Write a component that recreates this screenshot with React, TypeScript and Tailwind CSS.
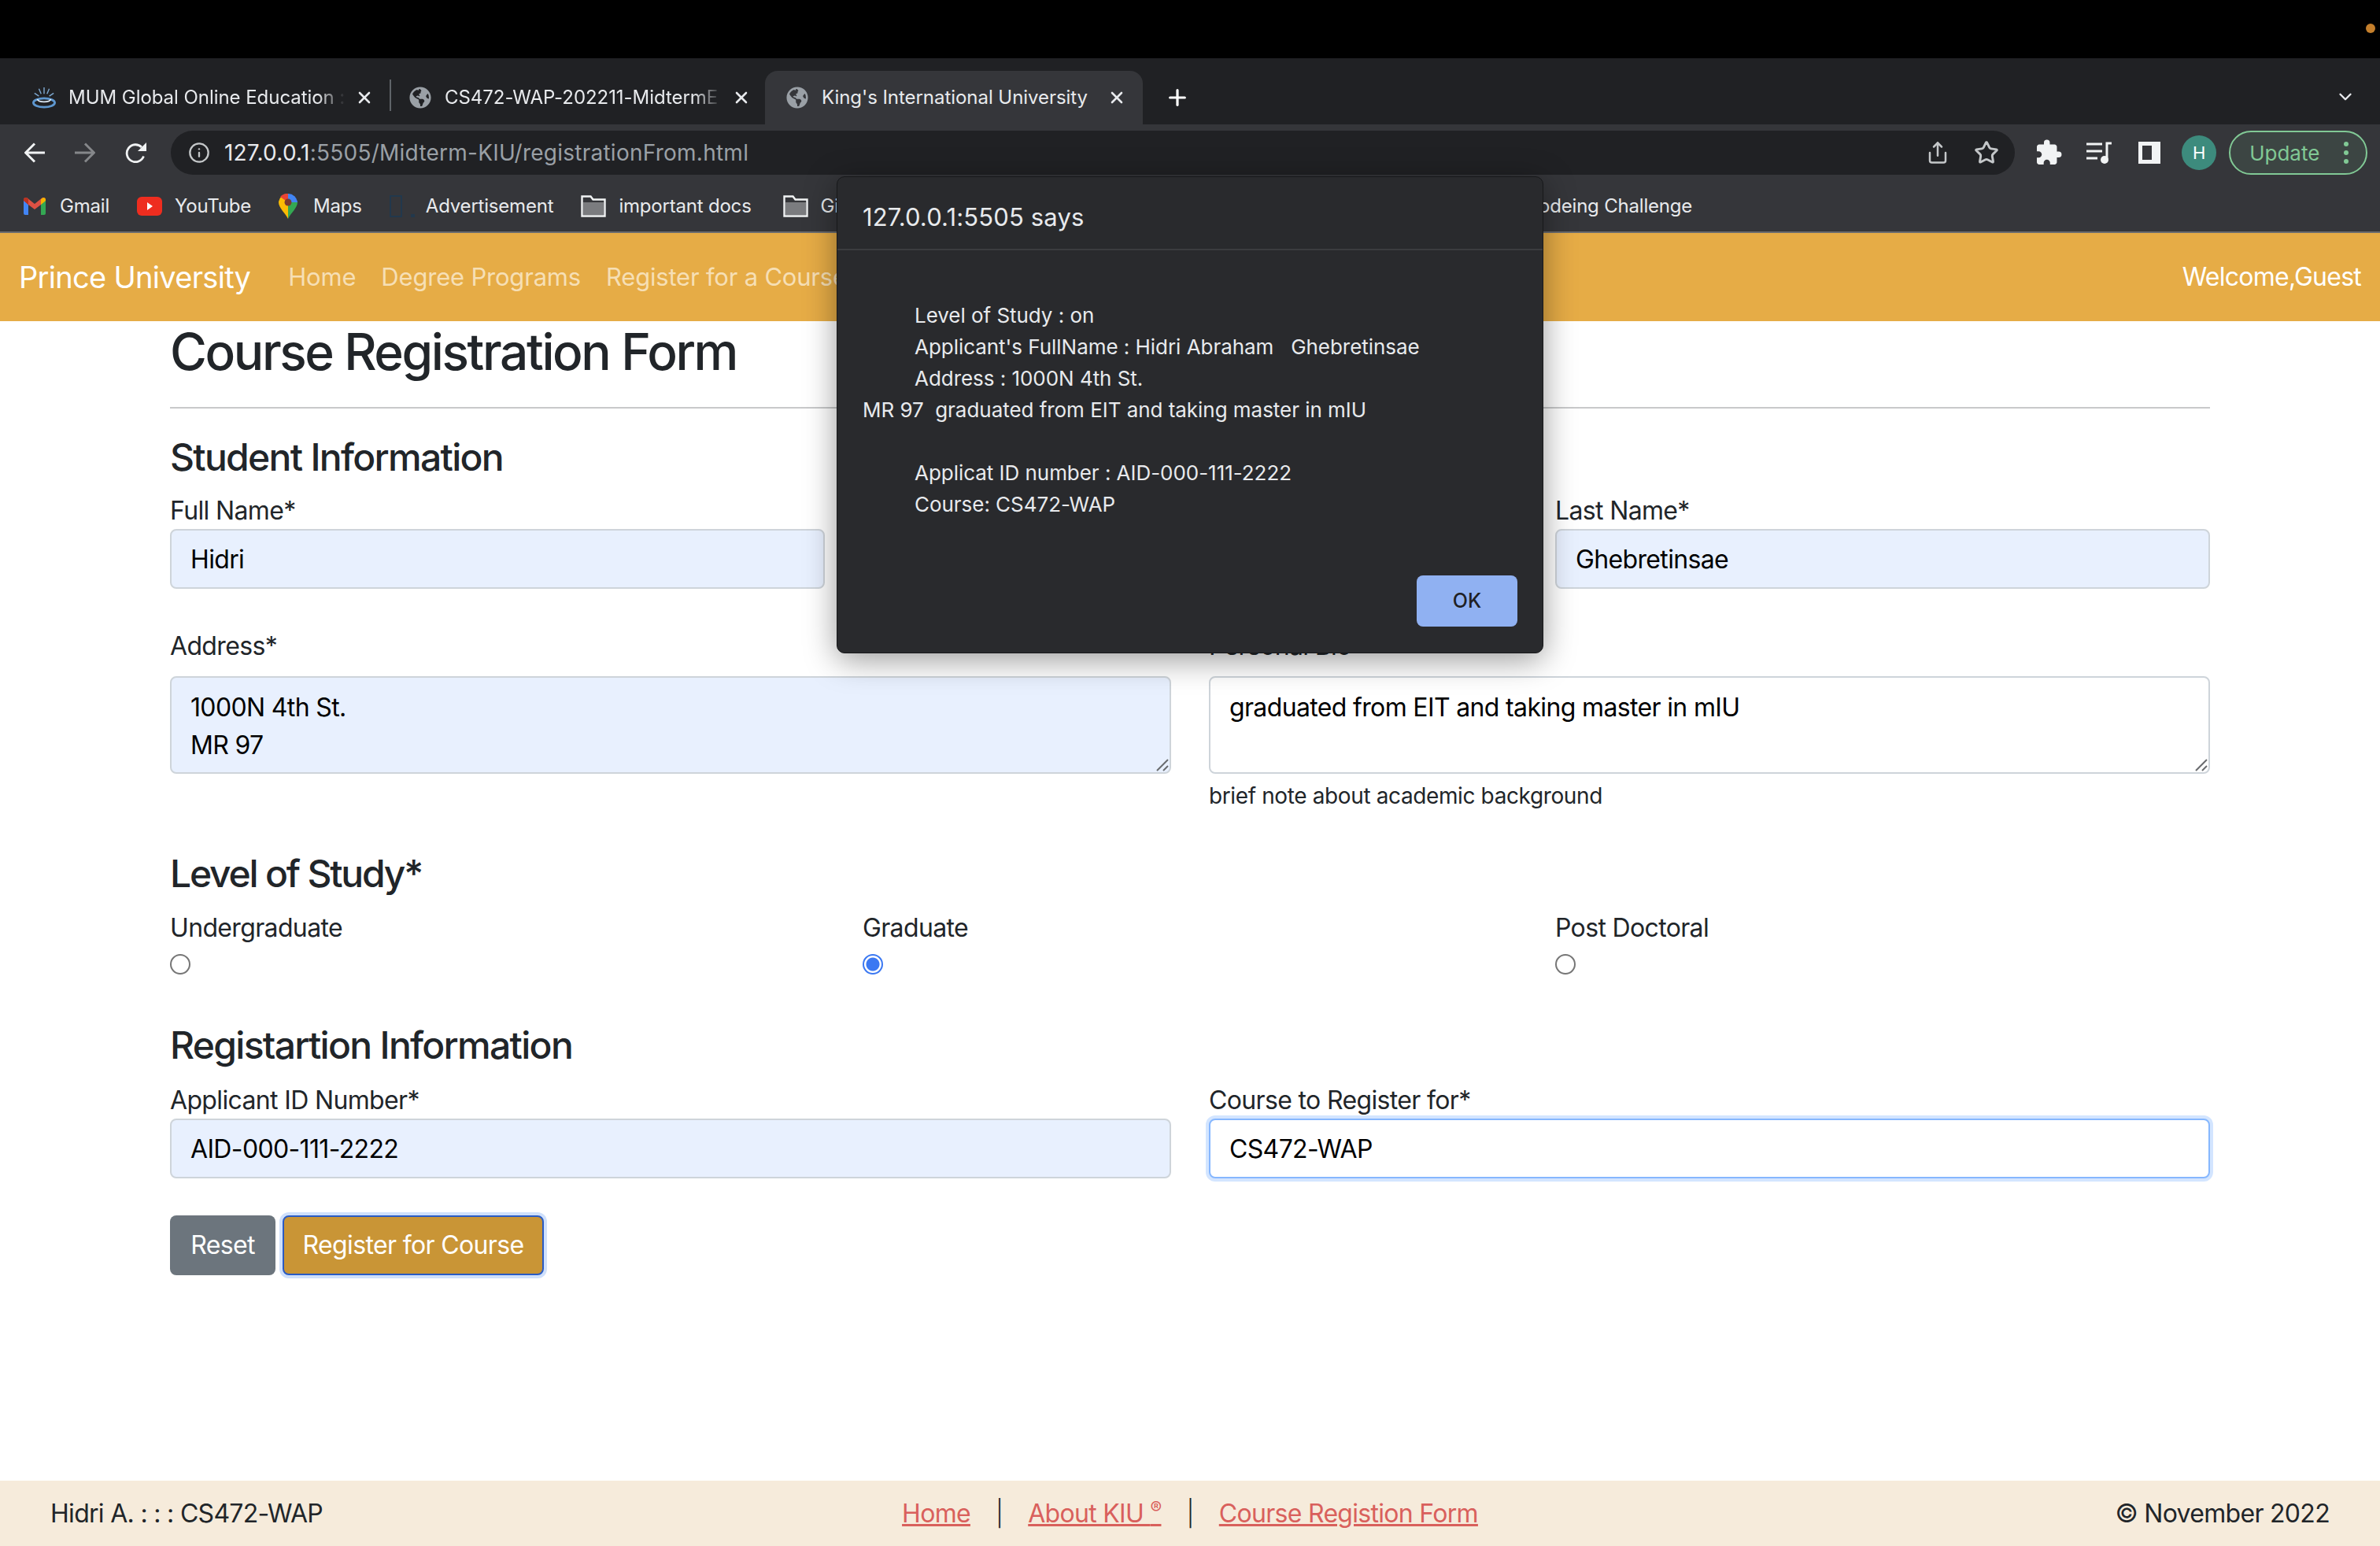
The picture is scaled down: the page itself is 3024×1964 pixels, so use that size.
import { ChevronDown, Info, Plus, Share, Star, X } from "lucide-react";
import { FaGlobeAmericas } from "react-icons/fa";
import { MdExtension } from "react-icons/md";

const FONT = "font-['Inter','Noto_Sans',sans-serif]";

function Tab({ title, className, close, active, fade, icon }: { title: string; className: string; close: string; active?: boolean; fade?: boolean; icon: React.ReactNode }) {
  return (
    <div className={`relative flex h-[68px] items-center rounded-t-[16px] ${className} ${active ? "bg-[#35363a]" : ""}`}>
      <span className="flex w-[30px] shrink-0 justify-center">{icon}</span>
      <span className={`ml-[16px] w-[352px] overflow-hidden whitespace-nowrap text-[24px] tracking-[-0.05px] text-[#e8eaed] ${fade ? "[mask-image:linear-gradient(to_right,black_90%,transparent)]" : ""}`}>
        {title}
      </span>
      <X className={`absolute h-[24px] w-[24px] text-[#e8eaed] ${close}`} strokeWidth={2.6} />
    </div>
  );
}

function Folder() {
  return (
    <svg width="32" height="28" viewBox="0 0 32 28" fill="none">
      <path d="M1.5 26.5V1.5h11l3 4h15v21z" stroke="#f1f3f4" strokeWidth="2.4" />
      <rect x="3" y="9" width="26" height="16" fill="#7b7c7f" />
    </svg>
  );
}

function Bookmark({ icon, label, gap = "gap-[18px]" }: { icon: React.ReactNode; label: string; gap?: string }) {
  return (
    <div className={`flex items-center ${gap} whitespace-nowrap text-[24px] tracking-[-0.2px] text-[#e8eaed]`}>
      {icon}
      <span>{label}</span>
    </div>
  );
}

function Field({ label, value, labelH = "h-[45px]", focus }: { label: string; value: string; labelH?: string; focus?: boolean }) {
  return (
    <div>
      <label className={`block leading-[44px] ${labelH}`}>{label}</label>
      <input
        readOnly
        value={value}
        className={`block h-[76px] w-full rounded-[8px] border-2 px-[24px] text-[32px] text-black outline-none ${
          focus ? "border-[#86b7fe] bg-white shadow-[0_0_0_4px_rgba(13,110,253,0.18)]" : "border-[#ced4da] bg-[#e8f0fe]"
        }`}
      />
    </div>
  );
}

function Area({ value, bg }: { value: string; bg: string }) {
  return (
    <div className="relative mt-[14px]">
      <textarea
        readOnly
        defaultValue={value}
        className={`block h-[124px] w-full resize-none rounded-[8px] border-2 border-[#ced4da] px-[24px] pb-[8px] pt-[14px] leading-[48px] text-black outline-none ${bg}`}
      />
      <svg className="absolute bottom-[3px] right-[3px]" width="16" height="16" viewBox="0 0 16 16" fill="none">
        <path d="M1 15 15 1M9 15l6-6" stroke="#6a6c6f" strokeWidth="2" />
      </svg>
    </div>
  );
}

function Radio({ label, checked }: { label: string; checked?: boolean }) {
  return (
    <div>
      <div className="h-[48px] leading-[48px]">{label}</div>
      <input
        type="radio"
        readOnly
        checked={!!checked}
        className="m-0 mt-[9px] block h-[26px] w-[26px] appearance-none rounded-full border-[2.5px] border-[#767676] bg-white checked:border-[#3b78f2] checked:bg-[radial-gradient(circle,#3b78f2_0_8px,white_9px)]"
      />
    </div>
  );
}

export default function App() {
  return (
    <div className={`relative flex h-[1964px] w-[3024px] flex-col overflow-hidden bg-white ${FONT}`}>
      {/* mac menu bar */}
      <div className="relative h-[74px] shrink-0 bg-black">
        <span className="absolute right-[6px] top-[30px] h-[12px] w-[12px] rounded-full bg-[#c47f2c]" />
      </div>

      {/* tab strip */}
      <div className="flex h-[84px] shrink-0 items-end bg-[#202124] pr-[31px]">
        <Tab
          title="MUM Global Online Education :"
          className="w-[495px] pl-[41px]"
          close="right-[20px]"
          fade
          icon={
            <svg width="32" height="28" viewBox="0 0 32 28" fill="none">
              <path d="M16 0v9M9 2l3 7M23 2l-3 7M3 8l6 4M29 8l-6 4" stroke="#7ea9d1" strokeWidth="1.5" />
              <ellipse cx="16" cy="21" rx="14.5" ry="6" stroke="#5e97cf" strokeWidth="3" />
              <path d="M7 16c1 5 17 5 18 0" stroke="#dbe8f4" strokeWidth="2" />
            </svg>
          }
        />
        <div className="mb-[17px] h-[40px] w-[2px] bg-[#5f6368]" />
        <Tab
          title="CS472-WAP-202211-MidtermE"
          className="w-[475px] pl-[22px]"
          close="right-[18px]"
          fade
          icon={<FaGlobeAmericas className="h-[28px] w-[28px] text-[#9aa0a6]" />}
        />
        <Tab
          title="King's International University"
          className="w-[480px] pl-[26px]"
          close="right-[21px]"
          active
          icon={<FaGlobeAmericas className="h-[28px] w-[28px] text-[#9aa0a6]" />}
        />
        <Plus className="mb-[18px] ml-[28px] h-[32px] w-[32px] text-white" strokeWidth={2.4} />
        <ChevronDown className="mb-[22px] ml-auto h-[26px] w-[26px] text-[#e8eaed]" strokeWidth={2.2} />
      </div>

      {/* toolbar */}
      <div className="flex h-[72px] shrink-0 items-center bg-[#35363a] pl-[31px] pr-[16px]">
        <svg width="26" height="26" viewBox="0 0 26 26" fill="none">
          <path d="M26 13H2M13 1.5 1.5 13 13 24.5" stroke="#f1f3f4" strokeWidth="3" />
        </svg>
        <svg className="ml-[38px]" width="26" height="26" viewBox="0 0 26 26" fill="none">
          <path d="M0 13h24M13 1.5 24.5 13 13 24.5" stroke="#85878a" strokeWidth="3" />
        </svg>
        <svg className="ml-[38px]" width="28" height="26" viewBox="0 0 28 26" fill="none">
          <path d="M23.5 17.5A11 11 0 1 1 21 6" stroke="#f1f3f4" strokeWidth="2.8" />
          <path d="M27 0v11H16z" fill="#f1f3f4" />
        </svg>
        <div className="ml-[30px] flex h-[56px] w-[2346px] items-center rounded-full bg-[#202124] pl-[22px] pr-[20px]">
          <Info className="h-[28px] w-[28px] text-[#c4c7c9]" strokeWidth={2} />
          <span className="ml-[18px] text-[28px] tracking-[0.25px] text-[#e8eaed]">
            127.0.0.1<span className="text-[#9aa0a6]">:5505/Midterm-KIU/registrationFrom.html</span>
          </span>
          <Share className="ml-auto mr-[-1px] h-[30px] w-[30px] text-[#c4c7c9]" strokeWidth={2} />
          <Star className="ml-[32px] h-[32px] w-[32px] text-[#c4c7c9]" strokeWidth={2.2} />
        </div>
        <MdExtension className="ml-[25px] h-[36px] w-[36px] text-[#f1f3f4]" />
        <svg className="ml-[30px]" width="32" height="28" viewBox="0 0 32 28" fill="none">
          <path d="M0 3h20M0 12h20M0 21h14" stroke="#f1f3f4" strokeWidth="3" />
          <path d="M26 22V2h6" stroke="#f1f3f4" strokeWidth="3" />
          <circle cx="23" cy="23" r="5" fill="#f1f3f4" />
        </svg>
        <div className="ml-[34px] h-[28px] w-[28px] border-[5px] border-r-[11px] border-[#f1f3f4]" />
        <div className="ml-[27px] flex h-[44px] w-[44px] items-center justify-center rounded-full bg-[#3d8b7d] text-[22px] text-white">H</div>
        <div className="ml-[16px] flex h-[56px] w-[176px] items-center rounded-full border-2 border-[#81c995] bg-[#3c4543] pl-[24px] pr-[22px] text-[26px] text-[#81c995]">
          Update
          <span className="ml-auto flex flex-col gap-[5px]">
            <i className="h-[6px] w-[6px] rounded-full bg-[#81c995]" />
            <i className="h-[6px] w-[6px] rounded-full bg-[#81c995]" />
            <i className="h-[6px] w-[6px] rounded-full bg-[#81c995]" />
          </span>
        </div>
      </div>

      {/* bookmarks bar */}
      <div className="flex h-[66px] shrink-0 items-center gap-[35px] border-b-2 border-[#6b6c6e] bg-[#35363a] pl-[30px]">
        <Bookmark
          label="Gmail"
          icon={
            <svg width="28" height="22" viewBox="0 0 28 22">
              <path d="M0 3v17q0 2 2 2h4V9z" fill="#4285f4" />
              <path d="M22 9v13h4q2 0 2-2V3z" fill="#34a853" />
              <path d="M0 3Q0 0 3 0h1l10 8L24 0h1q3 0 3 3l-6 6-8 6-8-6z" fill="#dd5144" />
              <path d="M22 2l3-2q3 0 3 3v1l-6 5z" fill="#f4b400" />
              <path d="M0 3q0-3 3-3h1l2 2v7L0 4z" fill="#b93221" />
            </svg>
          }
        />
        <Bookmark
          label="YouTube"
          gap="gap-[16px]"
          icon={
            <svg width="32" height="24" viewBox="0 0 32 24">
              <rect width="32" height="24" rx="6" fill="#ee2d1f" />
              <path d="M13 7l7 5-7 5z" fill="#fff" />
            </svg>
          }
        />
        <Bookmark
          label="Maps"
          gap="gap-[20px]"
          icon={
            <svg width="24" height="32" viewBox="0 0 24 32">
              <path d="M12 32C8 24 0 18 0 11A12 12 0 0 1 12 0v11z" fill="#fbbc04" />
              <path d="M12 32c4-8 12-14 12-21H12z" fill="#34a853" />
              <path d="M2 4l10 7V0a12 12 0 0 0-10 4z" fill="#ea4335" />
              <path d="M12 0a12 12 0 0 1 12 11H12z" fill="#4285f4" />
              <circle cx="12" cy="11" r="4.5" fill="#7a3b2e" />
            </svg>
          }
        />
        <Bookmark
          label="Advertisement"
          gap="gap-[14px]"
          icon={
            <svg width="32" height="28" viewBox="0 0 32 28" fill="none">
              <path d="M1 1h14v26H1zM28 25h4v2h-4z" stroke="#22384c" strokeWidth="2" />
            </svg>
          }
        />
        <Bookmark label="important docs" gap="gap-[16px]" icon={<Folder />} />
        <div className="ml-[5px]">
          <Bookmark label="GitHub" gap="gap-[16px]" icon={<Folder />} />
        </div>
        <div className="ml-[783px] whitespace-nowrap text-[24px] tracking-[-0.2px] text-[#e8eaed]">Codeing Challenge</div>
      </div>

      {/* site nav */}
      <div className="flex h-[112px] shrink-0 items-center bg-[#e6ac46] pl-[24px] pr-[24px]">
        <div className="text-[38px] tracking-[-0.7px] text-white">Prince University</div>
        <div className="ml-[48px] flex gap-[32px] text-[31px] tracking-[-0.2px] text-[#f6dfb5]">
          <span>Home</span>
          <span>Degree Programs</span>
          <span>Register for a Course</span>
        </div>
        <div className="ml-auto text-[32px] tracking-[-0.75px] text-white">Welcome,Guest</div>
      </div>

      {/* form */}
      <main className="w-[2592px] flex-1 self-center text-[32px] tracking-[-0.65px] text-[#212529]">
        <h1 className="m-0 h-[78px] text-[64px] font-medium leading-[78px] tracking-[-2.4px]">Course Registration Form</h1>
        <hr className="mt-[31px] border-t-2 border-[#c8c9ca]" />

        <h3 className="mt-[32px] h-[60px] text-[48px] font-medium leading-[60px] tracking-[-1.7px]">Student Information</h3>
        <div className="mt-[16px] grid grid-cols-3 gap-[48px]">
          <Field label="Full Name*" value="Hidri" />
          <Field label="Middle Name" value="Abraham" />
          <Field label="Last Name*" value="Ghebretinsae" />
        </div>

        <div className="mt-[49px] grid grid-cols-2 gap-[48px]">
          <div>
            <label className="block h-[48px] leading-[48px]">Address*</label>
            <Area value={"1000N 4th St.\nMR 97"} bg="bg-[#e8f0fe]" />
          </div>
          <div>
            <label className="block h-[48px] leading-[48px]">Personal Bio</label>
            <Area value="graduated from EIT and taking master in mIU" bg="bg-white" />
            <p className="mt-[10px] text-[28px] leading-[36px] tracking-[-0.38px]">brief note about academic background</p>
          </div>
        </div>

        <h3 className="mt-[51px] h-[60px] text-[48px] font-medium leading-[60px] tracking-[-2.2px]">Level of Study*</h3>
        <div className="mt-[15px] grid grid-cols-3 gap-[48px]">
          <Radio label="Undergraduate" />
          <Radio label="Graduate" checked />
          <Radio label="Post Doctoral" />
        </div>

        <h3 className="mt-[60px] h-[60px] text-[48px] font-medium leading-[60px] tracking-[-1.7px]">Registartion Information</h3>
        <div className="mt-[18px] grid grid-cols-2 gap-[48px]">
          <Field label="Applicant ID Number*" value="AID-000-111-2222" />
          <Field label="Course to Register for*" value="CS472-WAP" focus />
        </div>

        <div className="mt-[47px] flex gap-[9px]">
          <button type="button" className="h-[76px] w-[134px] rounded-[8px] bg-[#6c757d] text-[32px] text-white">Reset</button>
          <button
            type="button"
            className="h-[76px] w-[332px] rounded-[8px] border-2 border-[#2a5bc4] bg-[#c99536] text-[32px] text-white shadow-[0_0_0_4px_#cfe0fb]"
          >
            Register for Course
          </button>
        </div>
      </main>

      {/* footer */}
      <footer className="grid h-[83px] shrink-0 grid-cols-[1fr_auto_1fr] items-center bg-[#f6ebdb] px-[64px] text-[32px] tracking-[-0.7px] text-[#212529]">
        <span>Hidri A. : : : CS472-WAP</span>
        <div className="flex items-center">
          <a className="text-[#d9605c] underline">Home</a>
          <span className="mx-[32px] font-light">|</span>
          <a className="text-[#d9605c] underline">About KIU <sup className="text-[22px]">®</sup></a>
          <span className="mx-[32px] font-light">|</span>
          <a className="text-[#d9605c] underline">Course Registion Form</a>
        </div>
        <span className="justify-self-end">© November 2022</span>
      </footer>

      {/* alert dialog */}
      <div className="absolute left-[1063px] top-[224px] h-[606px] w-[898px] rounded-[10px] border border-[#17181a] bg-[#292a2d] text-[#e8eaed] shadow-[0_8px_40px_rgba(0,0,0,0.4)]">
        <div className="flex h-[93px] items-center border-b-2 border-[#3b3c3f] pl-[32px] pt-[12px] text-[31px] tracking-[0.15px]">127.0.0.1:5505 says</div>
        <div className="pl-[32px] pt-[63px] text-[26px] leading-[40px] tracking-[-0.04px]">
          <div className="pl-[66px]">Level of Study : on</div>
          <div className="whitespace-pre pl-[66px]">Applicant's FullName : Hidri Abraham   Ghebretinsae</div>
          <div className="pl-[66px]">Address : 1000N 4th St.</div>
          <div className="whitespace-pre">MR 97  graduated from EIT and taking master in mIU</div>
          <div className="h-[40px]" />
          <div className="pl-[66px]">Applicat ID number : AID-000-111-2222</div>
          <div className="pl-[66px]">Course: CS472-WAP</div>
        </div>
        <button
          type="button"
          className="absolute bottom-[33px] right-[32px] h-[65px] w-[128px] rounded-[8px] bg-[#90b1f2] text-[25px] font-medium text-[#202124]"
        >
          OK
        </button>
      </div>
    </div>
  );
}
